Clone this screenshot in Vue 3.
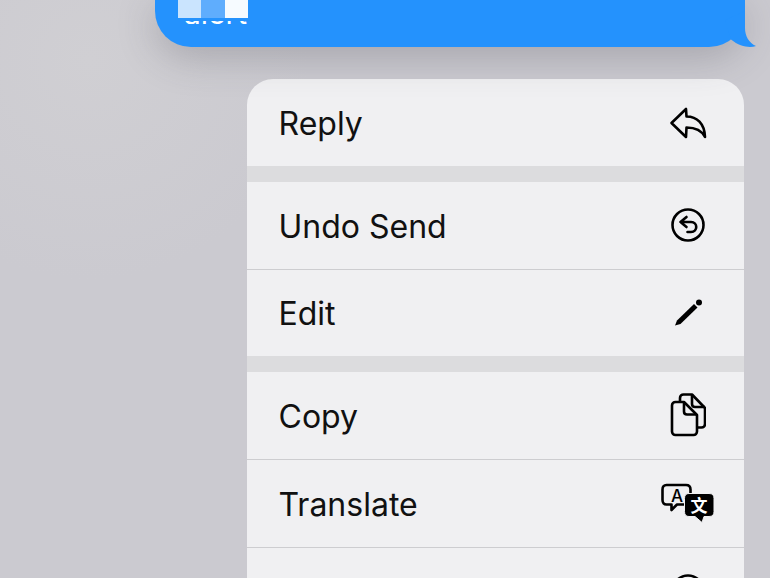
<template>
  <div class="screen">
    <div class="bubble-wrap">
      <div class="bubble">
        <div class="thumb">
          <span class="tile tile-a"></span>
          <span class="tile tile-b"></span>
          <span class="tile tile-c"></span>
        </div>
        <div class="caption"><span>alert</span></div>
      </div>
      <svg class="tail" width="38" height="40" viewBox="0 0 38 40">
        <path d="M25 1 L25 18 C25 26 29 33 36 36 C30 38 20 37 11 29.500 L5 10 Z" fill="#2492fd" />
      </svg>
    </div>

    <div class="menu">
      <template v-for="(group, g) in groups" :key="g">
        <div v-if="g > 0" class="gap"></div>
        <div v-for="item in group" :key="item.label" class="row">
          <span class="label">{{ item.label }}</span>
          <span class="icon">
            <svg v-if="item.icon === 'reply'" width="38" height="34" viewBox="0 0 38 34" fill="none" stroke="#000" stroke-width="2.600" stroke-linejoin="round" stroke-linecap="round">
              <path d="M2.500 17 L17 3 L17.500 10.500 C28 10.500 35.500 17.500 36 31 C33 25 27 21.500 17.500 21.500 L17 31 Z" />
            </svg>
            <svg v-else-if="item.icon === 'undo'" width="34" height="34" viewBox="0 0 34 34" fill="none" stroke="#000" stroke-width="2.600" stroke-linecap="round" stroke-linejoin="round">
              <circle cx="17" cy="17" r="15.500" />
              <path d="M15.500 9 L9.500 14 L15.500 19 M9.500 14 L20 14 C27 14 27 24 20 24 L16.500 24" />
            </svg>
            <svg v-else-if="item.icon === 'pencil'" width="30" height="30" viewBox="0 0 30 30">
              <path d="M2 27.500 L4 22.500 L21 6 L24.500 9.500 L7.500 26 Z" fill="#000" />
              <circle cx="26" cy="4.500" r="3" fill="#000" />
            </svg>
            <svg v-else-if="item.icon === 'copy'" width="36" height="44" viewBox="0 0 36 44" fill="none" stroke="#000" stroke-width="2.600" stroke-linejoin="round">
              <path d="M10 8.500 L10 5 C10 3 11.500 1.500 13.500 1.500 L22 1.500 L35 15 L35 31 C35 33 33.500 34.500 31.500 34.500 L27 34.500" />
              <path d="M22 1.500 L22 11 C22 13 23 14 25 14 L35 14" />
              <path d="M2 12.500 C2 10.500 3.500 9 5.500 9 L14 9 L27 22 L27 38.500 C27 40.500 25.500 42 23.500 42 L5.500 42 C3.500 42 2 40.500 2 38.500 Z" />
              <path d="M14 9 L14 18.500 C14 20.500 15 21.500 17 21.500 L27 21.500" />
            </svg>
            <svg v-else-if="item.icon === 'translate'" width="54" height="40" viewBox="0 0 54 40">
              <path d="M5.500 2 L25 2 C28 2 29.500 3.500 29.500 6.500 L29.500 17 C29.500 20 28 21.500 25 21.500 L16 21.500 L10.500 27 L10.500 21.500 L5.500 21.500 C3 21.500 1.500 20 1.500 17 L1.500 6.500 C1.500 3.500 3 2 5.500 2 Z" fill="#f0f0f2" stroke="#000" stroke-width="2.600" stroke-linejoin="round" />
              <text x="16" y="19" class="glyph-a">A</text>
              <path d="M28 10.500 L48 10.500 C51.500 10.500 53 12 53 15.500 L53 28.500 C53 32 51.500 33.500 48 33.500 L43 33.500 L41 39.500 L34 33.500 L28 33.500 C25 33.500 23.500 32 23.500 28.500 L23.500 15.500 C23.500 12 25 10.500 28 10.500 Z" fill="#000" stroke="#f0f0f2" stroke-width="1" />
              <text x="38" y="28.500" class="glyph-wen">文</text>
            </svg>
            <svg v-else-if="item.icon === 'partial'" width="34" height="34" viewBox="0 0 34 34" fill="none" stroke="#000" stroke-width="2.600">
              <circle cx="17" cy="17" r="15.500" />
            </svg>
          </span>
        </div>
      </template>
    </div>
  </div>
</template>

<script setup>
const groups = [
  [{ label: 'Reply', icon: 'reply' }],
  [
    { label: 'Undo Send', icon: 'undo' },
    { label: 'Edit', icon: 'pencil' }
  ],
  [
    { label: 'Copy', icon: 'copy' },
    { label: 'Translate', icon: 'translate' },
    { label: '', icon: 'partial' }
  ]
]
</script>

<style>
html,
body {
  margin: 0;
  overflow: hidden;
}
</style>

<style scoped>
.screen {
  width: 770px;
  height: 578px;
  overflow: hidden;
  background: radial-gradient(circle at 90px 60px, #d0cfd3 0, #cbcad0 220px);
  font-family: Inter, "Liberation Sans", sans-serif;
}

.bubble-wrap {
  position: relative;
  width: 590px;
  margin-left: 155px;
}

.bubble {
  height: 47px;
  background: #2492fd;
  border-radius: 0 0 36px 36px;
  box-shadow: 0 10px 38px rgba(70, 70, 80, 0.28);
  overflow: hidden;
  padding-left: 23px;
}

.thumb {
  display: flex;
  width: 70px;
  height: 18px;
}

.tile {
  flex: 1;
}

.tile-a {
  background: #cae4fe;
}

.tile-b {
  background: #5fadfd;
}

.tile-c {
  background: #f6fbff;
}

.caption {
  position: relative;
  height: 3px;
  margin: 3px 0 0 6px;
  overflow: hidden;
}

.caption span {
  position: absolute;
  left: 0;
  bottom: 0;
  margin-bottom: -4px;
  color: #fff;
  font-size: 30px;
  line-height: 30px;
}

.tail {
  position: absolute;
  right: -13px;
  top: 10px;
}

.menu {
  width: 497px;
  margin: 32px 0 0 247px;
  padding-top: 0.750px;
  background: #f0f0f2;
  border-radius: 26px 26px 0 0;
  overflow: hidden;
}

.gap {
  height: 16px;
  background: #dcdcde;
}

.row {
  height: 87.750px;
  display: flex;
  align-items: center;
  justify-content: space-between;
  padding: 0 29px 0 31.500px;
  box-sizing: border-box;
  border-bottom: 1px solid #cdcdd0;
}

.row:has(+ .gap) {
  height: 86.250px;
  border-bottom: none;
}

.label {
  margin-top: 2px;
  font-size: 32px;
  color: #111;
}

.icon {
  width: 54px;
  height: 44px;
  display: flex;
  align-items: center;
  justify-content: center;
}

.glyph-a {
  font-family: Inter, sans-serif;
  font-size: 17px;
  font-weight: 500;
  text-anchor: middle;
}

.glyph-wen {
  font-family: "Noto Sans CJK SC", sans-serif;
  font-size: 17px;
  font-weight: 700;
  fill: #fff;
  text-anchor: middle;
}
</style>
